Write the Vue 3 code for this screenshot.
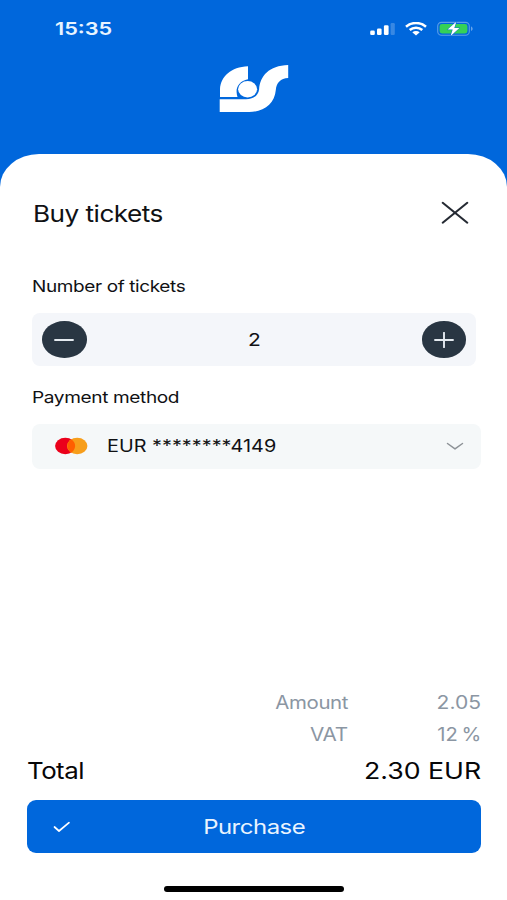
<script setup>
import { ref, computed } from 'vue'

const count = ref(2)
const unitNet = 1.025
const amount = computed(() => (count.value * unitNet).toFixed(2))
const total = computed(() => (count.value * 1.15).toFixed(2))
const step = (d) => { count.value = Math.max(1, count.value + d) }
</script>

<template>
  <div class="screen">
    <header class="header">
      <div class="status">
        <span class="wide time">15:35</span>
        <div class="indicators">
          <svg class="signal" width="26" height="14" viewBox="0 0 26 14">
            <rect x="1.2" y="8.6" width="4.6" height="4.4" rx="1.3" fill="#fff" />
            <rect x="8" y="6.4" width="4.6" height="6.6" rx="1.3" fill="#fff" />
            <rect x="14.9" y="3.2" width="4.7" height="9.800" rx="1.3" fill="#fff" />
            <rect x="21.6" y="1" width="4.2" height="12" rx="1.2" fill="#fff" opacity="0.22" />
          </svg>
          <svg class="wifi" width="22" height="14" viewBox="0 0 22 14">
            <g fill="none" stroke="#fff" stroke-width="2.5">
              <path d="M1 4.7C6.600 -0.2 15.400 -0.2 21 4.700" />
              <path d="M4.700 8C8.300 4.900 13.700 4.900 17.300 8" />
            </g>
            <path d="M7.300 10.300C9.400 8.600 12.600 8.600 14.700 10.300L11 13.600Z" fill="#fff" />
          </svg>
          <svg class="battery" width="37" height="16" viewBox="0 0 37 16">
            <rect x="0.700" y="1.400" width="31.600" height="12.800" rx="3.800" fill="none" stroke="#fff" stroke-opacity="0.36" stroke-width="1.100" />
            <rect x="2.600" y="3.100" width="27.800" height="9.400" rx="2.400" fill="#35d158" />
            <path d="M34 5.500C36.200 6.200 36.200 9.200 34 9.900Z" fill="#fff" fill-opacity="0.400" />
            <path d="M19.300 0.800L10.600 8.600H15.700L13.600 15L22.400 7H17.300Z" fill="#fff" stroke="#0067dc" stroke-width="0.900" paint-order="stroke" />
          </svg>
        </div>
      </div>
      <svg class="logo" width="70" height="48" viewBox="0 0 70 48">
        <path fill="#fff" d="M29 1.300V14.300C21.500 15.600 17.200 21.300 17.600 27C17.700 29 18 30.500 18.500 32H1V24C1.800 11.500 12 2 29 1.300Z" />
        <ellipse cx="28.600" cy="24.300" rx="9.500" ry="8.200" fill="#fff" />
        <path fill="#fff" d="M0.700 34.300H27C34 34.300 39.300 30.800 40.100 24.500C41 11 50 0.500 69.200 0V13C61.500 13.500 57.500 17.500 56.800 25C55.700 38.500 45 47 30 47H0.700Z" />
      </svg>
    </header>

    <main class="sheet">
      <div class="title-row">
        <h1 class="wide title">Buy tickets</h1>
        <button class="plain" aria-label="Close">
          <svg width="28" height="24" viewBox="0 0 28 24">
            <path d="M1.700 1.800L26.300 21.700M26.300 1.800L1.700 21.700" stroke="#252a33" stroke-width="2.100" stroke-linecap="round" />
          </svg>
        </button>
      </div>

      <div class="label"><span class="wide label-count">Number of tickets</span></div>
      <div class="stepper">
        <button class="round" aria-label="Fewer" @click="step(-1)">
          <svg width="20" height="16" viewBox="0 0 20 16"><path d="M1 8H19" stroke="#e4eaf0" stroke-width="1.900" stroke-linecap="round" /></svg>
        </button>
        <span class="wide count">{{ count }}</span>
        <button class="round" aria-label="More" @click="step(1)">
          <svg width="20" height="16" viewBox="0 0 20 16"><path d="M1 8H19M10 0.800V15.200" stroke="#e4eaf0" stroke-width="1.900" stroke-linecap="round" /></svg>
        </button>
      </div>

      <div class="label second"><span class="wide label-pay">Payment method</span></div>
      <div class="select">
        <svg class="card" width="33" height="18" viewBox="0 0 33 18">
          <ellipse cx="10.300" cy="9" rx="10.200" ry="8.300" fill="#eb001b" />
          <ellipse cx="22.200" cy="9" rx="10.200" ry="8.300" fill="#f79e1b" />
          <path d="M16.250 2.300C21.400 5.700 21.400 12.300 16.250 15.700C11.100 12.300 11.100 5.700 16.250 2.300Z" fill="#ff5f00" />
        </svg>
        <span class="wide account">EUR ********4149</span>
        <svg class="chevron" width="18" height="9" viewBox="0 0 18 9">
          <path d="M1.500 1.500L9 6.900L16.500 1.500" fill="none" stroke="#8d9297" stroke-width="1.500" stroke-linecap="round" stroke-linejoin="round" />
        </svg>
      </div>

      <div class="summary">
        <div class="line"><span class="wide right amount">Amount</span><span class="wide right amount-value">{{ amount }}</span></div>
        <div class="line"><span class="wide right vat">VAT</span><span class="wide right vat-value">12&#8201;%</span></div>
        <div class="total-row"><span class="wide total">Total</span><span class="wide right total-value">{{ total }} EUR</span></div>
        <button class="purchase">
          <svg class="check" width="18" height="12" viewBox="0 0 18 12">
            <path d="M1.500 6L6 10L16 1.700" fill="none" stroke="#fff" stroke-width="1.700" stroke-linecap="round" stroke-linejoin="round" />
          </svg>
          <span class="wide purchase-text">Purchase</span>
        </button>
        <div class="home"></div>
      </div>
    </main>
  </div>
</template>

<style>
body { margin: 0; }
</style>

<style scoped>
.screen {
  width: 507px;
  height: 900px;
  overflow: hidden;
  display: flex;
  flex-direction: column;
  background: #0067dc;
  font-family: Inter, "Liberation Sans", sans-serif;
  color: #101114;
}
button { border: 0; padding: 0; font-family: inherit; cursor: pointer; }
.wide {
  display: inline-block;
  white-space: nowrap;
  transform: scaleX(1.15);
  transform-origin: left center;
}
.right { transform-origin: right center; }

.header { height: 154px; display: flex; flex-direction: column; align-items: center; }
.status {
  width: 100%;
  height: 57px;
  box-sizing: border-box;
  padding: 0 33px 0 55px;
  display: flex;
  align-items: center;
  justify-content: space-between;
}
.time { font-size: 17.5px; font-weight: 600; color: #e9f4ff; transform: scaleX(1.24); }
.indicators { display: flex; align-items: center; }
.wifi { margin-left: 10px; }
.battery { margin-left: 10px; }
.logo { margin-top: 8px; }

.sheet {
  flex: 1;
  display: flex;
  flex-direction: column;
  padding: 39px 26px 0 32px;
  background: #fff;
  border-radius: 39px 39px 0 0 / 33px 33px 0 0;
}
.title-row { display: flex; align-items: center; justify-content: space-between; height: 40px; padding: 0 12px 0 1px; }
.title { margin: 0; font-size: 22.5px; font-weight: 400; letter-spacing: -0.02em; transform: scaleX(1.163); }
.plain { background: none; display: flex; }
.label { height: 22px; margin-top: 42px; display: flex; align-items: center; font-size: 16.5px; letter-spacing: -0.02em; }
.second { margin-top: 20px; }
.label-pay { transform: scaleX(1.156); }
.stepper {
  height: 53px;
  margin: 16px 5px 0 0;
  padding: 0 10px;
  box-sizing: border-box;
  border-radius: 8px;
  background: #f4f6fa;
  display: flex;
  align-items: center;
  justify-content: space-between;
}
.round {
  width: 44.500px;
  height: 36.500px;
  border-radius: 50%;
  background: #293643;
  display: flex;
  align-items: center;
  justify-content: center;
}
.count { font-size: 17.500px; transform: scaleX(1.2); transform-origin: center; }
.select {
  height: 45px;
  margin-top: 15.500px;
  padding: 0 17px 0 22.500px;
  border-radius: 8px;
  background: #f5f8f9;
  display: flex;
  align-items: center;
}
.account { margin-left: 19px; font-size: 16.800px; transform: scaleX(1.182); }
.chevron { margin-left: auto; }

.summary { margin: auto 0 8.500px -5px; display: flex; flex-direction: column; }
.line {
  height: 32px;
  display: grid;
  grid-template-columns: 321px 1fr;
  align-items: center;
  justify-items: end;
  font-size: 18px;
  color: #8b96a3;
}
.amount { letter-spacing: -0.02em; transform: scaleX(1.135); }
.amount-value { transform: scaleX(1.17); }
.vat { letter-spacing: -0.02em; }
.vat-value { transform: scaleX(1.12); }
.total-row { height: 39px; display: flex; align-items: center; justify-content: space-between; font-size: 22.800px; color: #060607; }
.total { letter-spacing: -0.02em; transform: scaleX(1.133); }
.total-value { transform: scaleX(1.17); }
.purchase {
  height: 53.500px;
  margin-top: 10px;
  border-radius: 9px;
  background: #0067dc;
  color: #e9f4ff;
  display: grid;
  grid-template-columns: 27px 1fr 27px;
  align-items: center;
  justify-items: center;
}
.check { justify-self: start; margin: 2px 0 0 26px; }
.purchase-text { margin-top: 2px; font-size: 19.800px; letter-spacing: -0.02em; transform: scaleX(1.21); transform-origin: center; }
.home { align-self: center; width: 180px; height: 5.500px; margin: 33px 0 0; border-radius: 3px; background: #000; }
</style>
